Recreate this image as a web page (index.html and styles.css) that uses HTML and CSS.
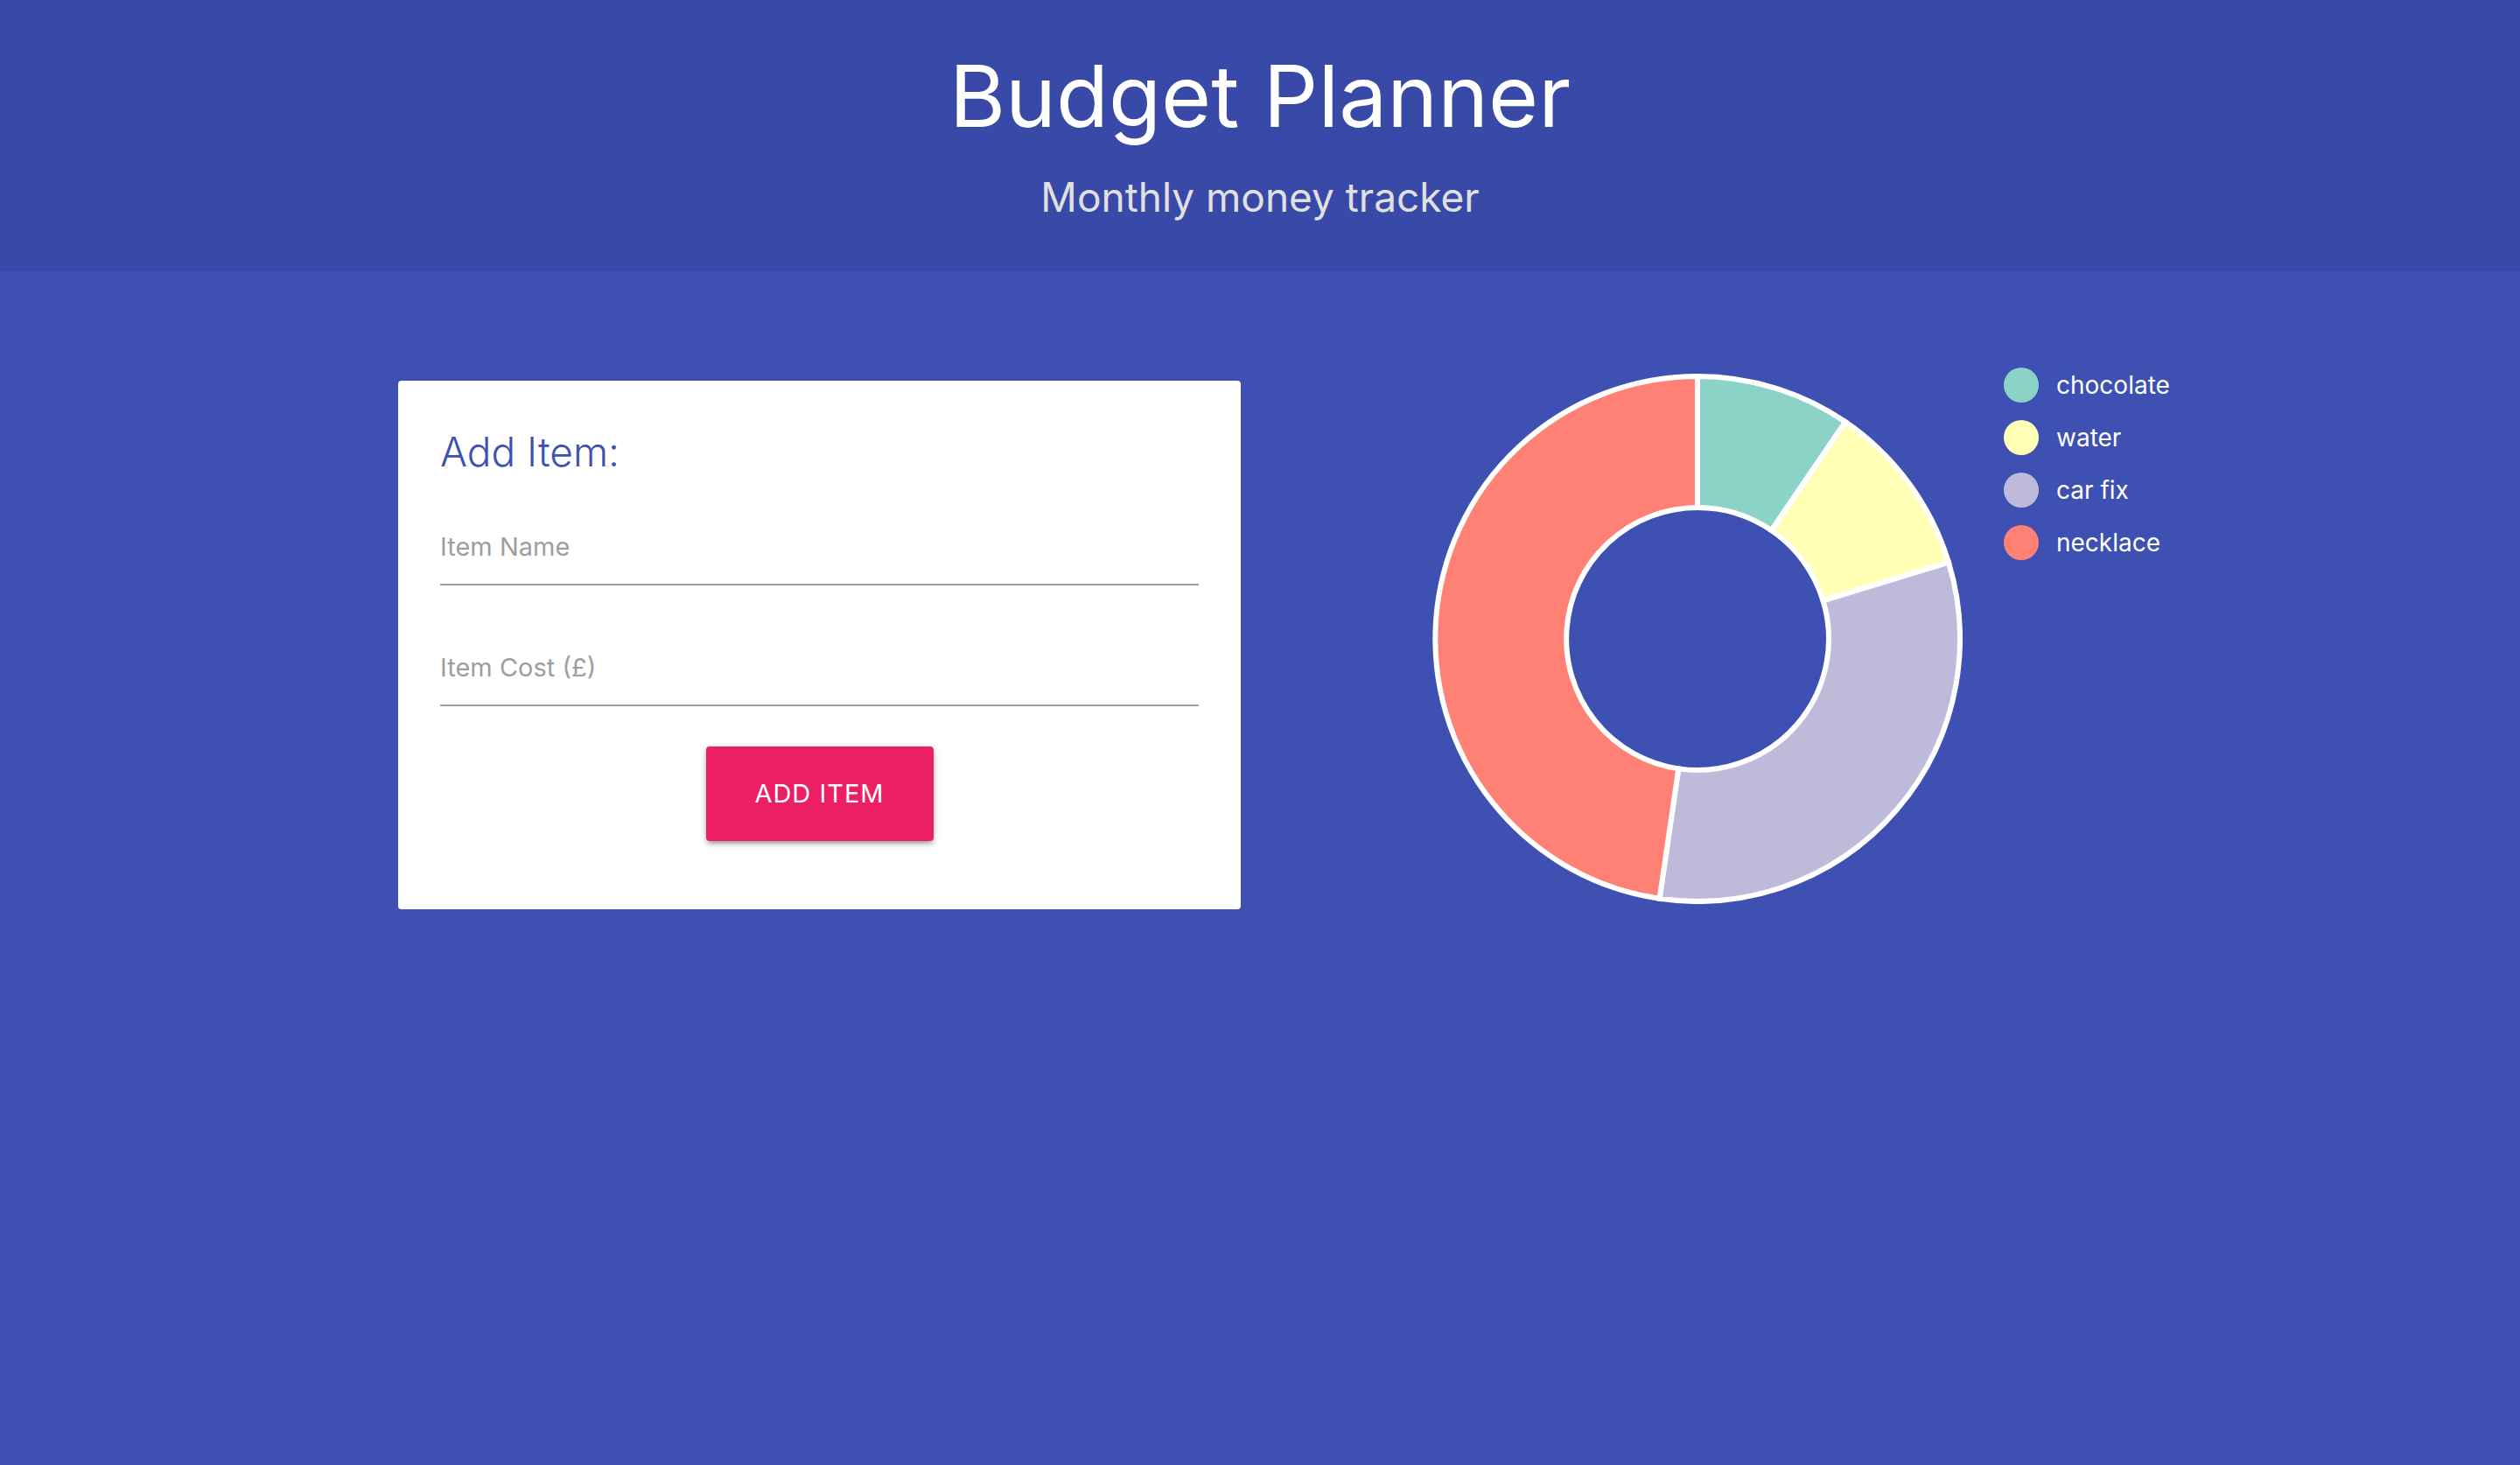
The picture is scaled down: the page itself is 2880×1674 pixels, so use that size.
FILE: index.html
```html
<!DOCTYPE html>
<html lang="en">
<head>
  <meta charset="utf-8">
  <meta name="viewport" content="width=device-width, initial-scale=1">
  <title>Budget Planner</title>
  <link rel="stylesheet" href="styles.css">
</head>
<body>
  <header class="header">
    <h1 class="title">Budget Planner</h1>
    <p class="subtitle">Monthly money tracker</p>
  </header>

  <main class="main">
    <form class="card">
      <h2 class="card-title">Add Item:</h2>
      <input class="field" type="text" id="name" placeholder="Item Name" aria-label="Item Name">
      <input class="field" type="text" inputmode="decimal" id="cost" placeholder="Item Cost (£)" aria-label="Item Cost (£)">
      <button class="button" type="button">ADD ITEM</button>
    </form>

    <section class="chart" aria-label="Spending by item">
      <svg class="donut" viewBox="-303 -303 606 606" role="img" aria-label="Donut chart">
        <path class="chocolate" d="M0-300A300 300 0 0 1 168.97-247.9L84.5-123.9A150 150 0 0 0 0-150Z"/>
        <path class="water" d="M168.97-247.9A300 300 0 0 1 286.98-87.45L143.5-43.7A150 150 0 0 0 84.5-123.9Z"/>
        <path class="car" d="M286.98-87.45A300 300 0 0 1-43.4 296.8L-21.7 148.4A150 150 0 0 0 143.5-43.7Z"/>
        <path class="necklace" d="M-43.4 296.8A300 300 0 0 1 0-300L0-150A150 150 0 0 0-21.7 148.4Z"/>
      </svg>
      <ul class="legend">
        <li><span class="dot chocolate"></span>chocolate</li>
        <li><span class="dot water"></span>water</li>
        <li><span class="dot car"></span>car fix</li>
        <li><span class="dot necklace"></span>necklace</li>
      </ul>
    </section>
  </main>
</body>
</html>
```
FILE: styles.css
```css
* {
  box-sizing: border-box;
}

body {
  margin: 0;
  min-height: 100vh;
  background: #3e50b2;
  color: #fff;
  font-family: Inter, "Liberation Sans", sans-serif;
  font-size: 29px;
  line-height: 40px;
}

.header {
  padding: 46px 24px 52px;
  background: #3949a8;
  text-align: center;
}

.title {
  margin: 0;
  font-size: 98px;
  font-weight: 400;
  line-height: 128px;
}

.subtitle {
  margin: 18px 0 0;
  color: #e0e0e0;
  font-size: 46px;
  line-height: 66px;
}

.main {
  display: flex;
  flex-wrap: wrap;
  align-items: flex-start;
  gap: 48px 219px;
  padding: 110px 12% 48px calc(15% + 23px);
}

.card {
  display: flex;
  flex: 1 1 480px;
  flex-direction: column;
  max-width: 963px;
  margin-top: 15px;
  padding: 48px 48px 78px;
  border-radius: 4px;
  background: #fff;
}

.card-title {
  margin: 0 0 32px;
  color: #3e50b2;
  font-size: 46px;
  font-weight: 300;
  line-height: 66px;
}

.field {
  width: 100%;
  height: 88px;
  margin-bottom: 50px;
  padding: 0;
  border: 0;
  border-bottom: 2px solid #9e9e9e;
  border-radius: 0;
  outline: 0;
  background: transparent;
  color: #212121;
  font: inherit;
}

.field::placeholder {
  color: #9e9e9e;
  opacity: 1;
}

.button {
  align-self: center;
  width: 260px;
  height: 108px;
  margin-top: -4px;
  padding: 0;
  border: 0;
  border-radius: 4px;
  background: #ed1f63;
  box-shadow: 0 4px 4px rgba(0, 0, 0, .14), 0 6px 2px -4px rgba(0, 0, 0, .12), 0 2px 10px rgba(0, 0, 0, .2);
  color: #fff;
  font: inherit;
  letter-spacing: 1px;
}

.chart {
  display: flex;
  gap: 47px;
}

.donut {
  width: 606px;
  height: 606px;
  margin-top: 7px;
  stroke: #fff;
  stroke-width: 6px;
}

.legend {
  display: grid;
  align-content: start;
  gap: 20px;
  margin: 0;
  padding: 0;
  list-style: none;
}

.legend li {
  display: flex;
  align-items: center;
  gap: 20px;
  font-size: 28px;
  white-space: nowrap;
}

.dot {
  width: 40px;
  height: 40px;
  border-radius: 50%;
}

.chocolate {
  fill: #8bd3c7;
  background: #8bd3c7;
}

.water {
  fill: #ffffb5;
  background: #ffffb5;
}

.car {
  fill: #bebada;
  background: #bebada;
}

.necklace {
  fill: #ff8074;
  background: #ff8074;
}
```
